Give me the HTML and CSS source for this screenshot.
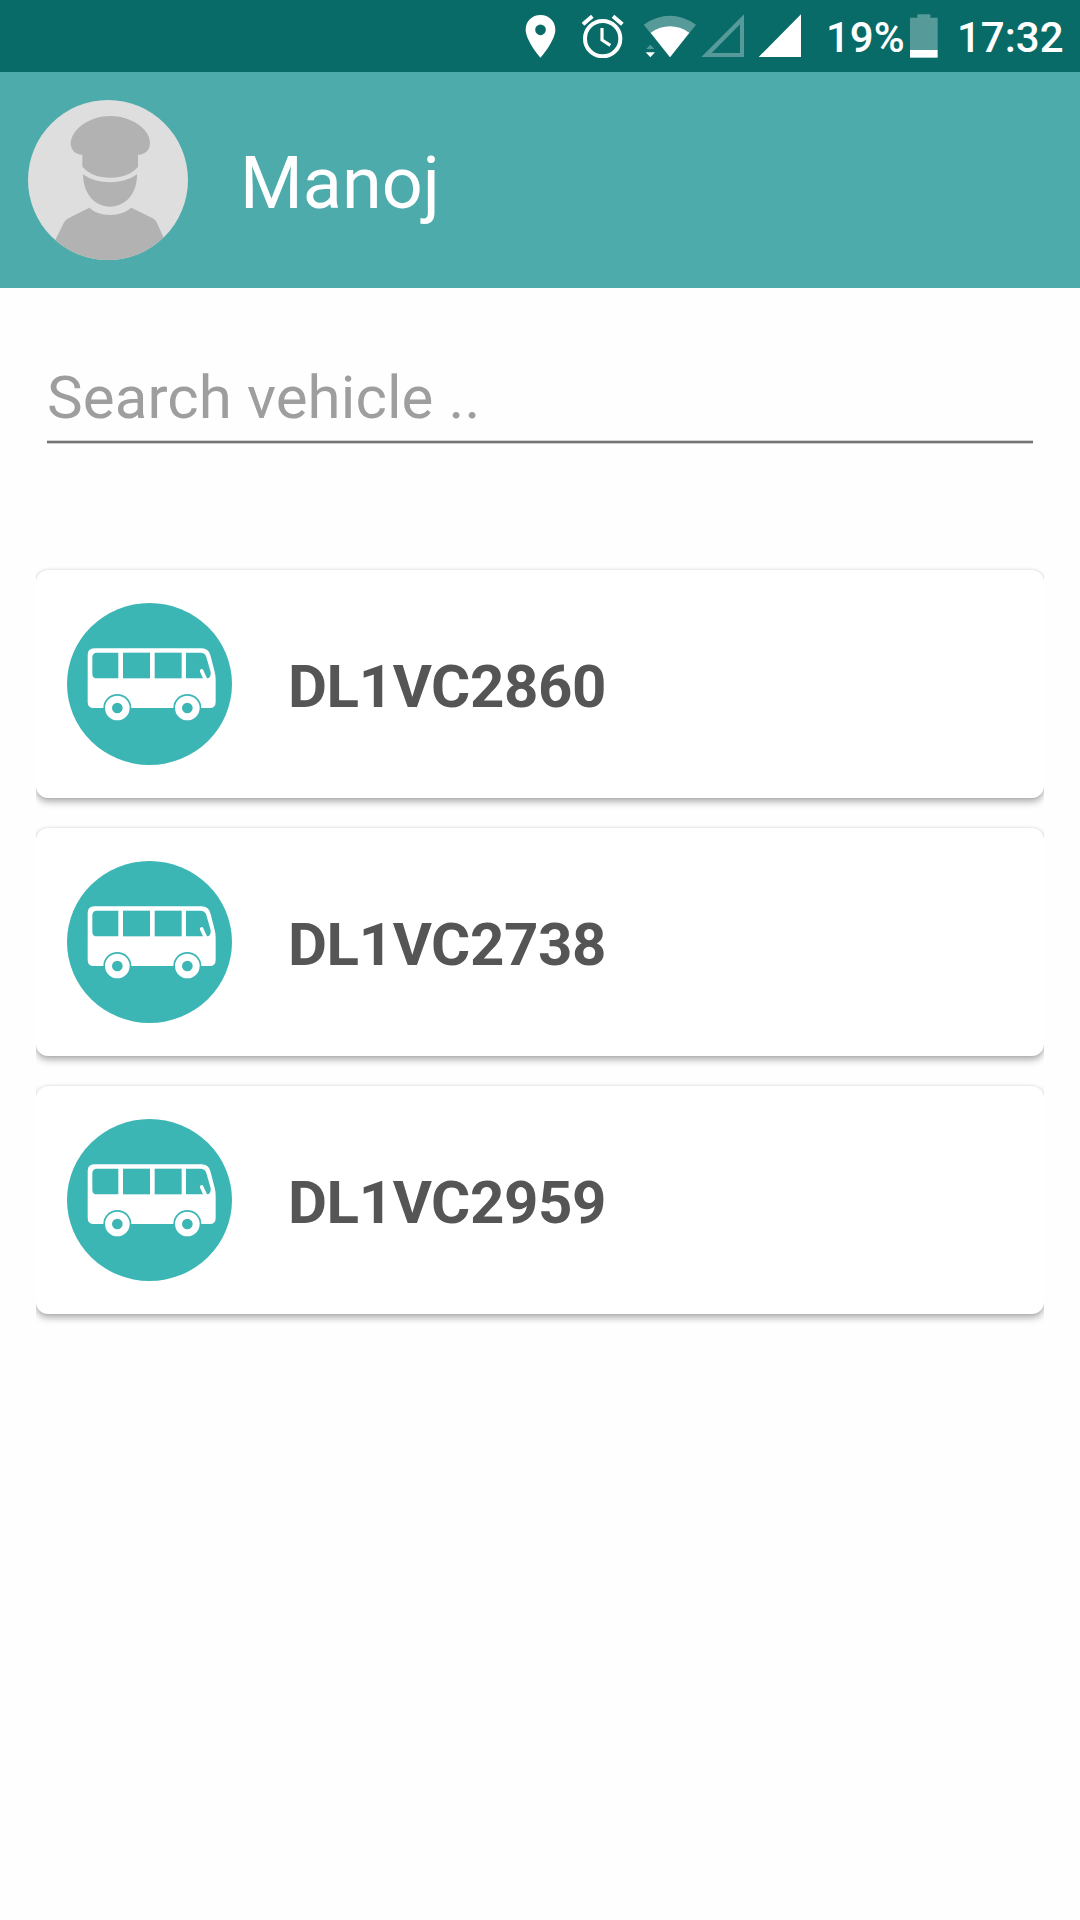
FILE: index.html
```html
<!DOCTYPE html>
<html lang="en">
<head>
<meta charset="UTF-8" />
<meta name="viewport" content="width=device-width, initial-scale=1" />
<title>Vehicles</title>
<link rel="stylesheet" href="styles.css">
</head>
<body>

<!-- bus symbol, shared by all the cards -->
<svg class="defs" aria-hidden="true">
  <symbol id="bus" viewBox="0 0 495 486" preserveAspectRatio="none">
    <ellipse cx="247.5" cy="243" rx="247.5" ry="243" fill="#3cb5b5"/>
    <path fill="#fff" d="M82 136H404Q424 136 430 156L443 206Q446 218 446 232V297Q446 315 428 315H80Q62 315 62 297V156Q62 136 82 136Z"/>
    <g fill="#3cb5b5">
      <path d="M90 149H154V226H90Q76 226 76 212V163Q76 149 90 149Z"/>
      <path d="M168 149H249V226H168Z"/>
      <path d="M263 149H344V226H263Z"/>
      <path d="M357 149H400Q414 149 418 162L431 208Q432 226 420 226H357Z"/>
      <circle cx="151" cy="315" r="42"/>
      <circle cx="361" cy="315" r="42"/>
    </g>
    <path d="M404 204L415 228" stroke="#fff" stroke-width="11" stroke-linecap="round"/>
    <circle cx="151" cy="315" r="26.5" fill="none" stroke="#fff" stroke-width="21"/>
    <circle cx="361" cy="315" r="26.5" fill="none" stroke="#fff" stroke-width="21"/>
  </symbol>
</svg>

<div class="status-bar">
  <svg class="icon-pin" viewBox="75 42 93 132">
    <path fill="#fff" fill-rule="evenodd" d="M121.500 45C96 45 77 64 77 89C77 122 121.500 173 121.500 173S166 122 166 89C166 64 147 45 121.500 45ZM121.500 73.500A16 16 0 1 1 121.500 105.500A16 16 0 1 1 121.500 73.500Z"/>
  </svg>
  <svg class="icon-alarm" viewBox="243 42 129 132">
    <g fill="none" stroke="#fff">
      <circle cx="308" cy="116" r="53" stroke-width="12"/>
      <path d="M306 84V120L331 136" stroke-width="9.500"/>
      <path d="M249 73L277 49M367 73L339 49" stroke-width="12"/>
    </g>
  </svg>
  <svg class="icon-wifi" viewBox="429 42 162 132">
    <path fill="#569b99" d="M431 74Q510 21 588 74L510 172Z"/>
    <path fill="#fff" d="M452 98Q510 60 568 98L510 172Z"/>
    <path fill="#569b99" d="M439 147L451 134L463 147Z"/>
    <path fill="#fff" d="M437 157H465L451 172Z"/>
  </svg>
  <svg class="icon-signal" viewBox="603 42 132 132">
    <path fill="#569b99" fill-rule="evenodd" d="M732 43V171H604ZM720 73L635 159H720Z"/>
  </svg>
  <svg class="icon-signal full" viewBox="774 42 132 132">
    <path fill="#fff" d="M903 43V171H776Z"/>
  </svg>
  <span class="battery-text">19%</span>
  <svg class="icon-battery" viewBox="330 42 84 132">
    <path fill="#569b99" d="M330 53H352V43H391V53H413V151H330Z"/>
    <path fill="#fff" d="M330 150H413V173H330Z"/>
  </svg>
  <span class="clock">17:32</span>
</div>

<header>
  <svg class="avatar" viewBox="0 0 480 480">
    <clipPath id="round"><circle cx="240" cy="240" r="240"/></clipPath>
    <circle cx="240" cy="240" r="240" fill="#dedede"/>
    <g fill="#b2b2b2" clip-path="url(#round)">
      <path d="M247 48C310 48 366 88 366 128C366 150 352 163 330 164V200C312 222 282 233 247 233S182 222 163 200V164C142 163 128 150 128 128C132 88 184 48 247 48Z"/>
      <path d="M165 223C186 239 216 247 246 247S306 239 327 223C328 282 292 320 246 320S166 282 165 223Z"/>
      <path d="M82 420L107 369Q111 360 121 355L184 323Q206 344 246 345Q286 344 310 323L374 355Q382 359 386 367L410 420V480H82Z"/>
    </g>
  </svg>
  <h1>Manoj</h1>
</header>

<main>
  <input class="search" type="text" placeholder="Search vehicle ..">

  <div class="vehicle-list">
    <div class="vehicle-card">
      <svg class="bus"><use href="#bus"/></svg>
      <span class="plate">DL1VC2860</span>
    </div>
    <div class="vehicle-card">
      <svg class="bus"><use href="#bus"/></svg>
      <span class="plate">DL1VC2738</span>
    </div>
    <div class="vehicle-card">
      <svg class="bus"><use href="#bus"/></svg>
      <span class="plate">DL1VC2959</span>
    </div>
  </div>
</main>

</body>
</html>
```

FILE: styles.css
```css
:root {
  --status-color: #096b68;
  --primary-color: #4eabab;
  --text-color: #555;
  --hint-color: #9e9e9e;
}

* {
  box-sizing: border-box;
}

body {
  margin: 0;
  min-height: 1920px;
  font-family: Roboto, sans-serif;
  background-color: #fefefe;
  color: var(--text-color);
}

svg {
  display: block;
  flex: none;
}

.defs {
  display: none;
}

.status-bar {
  height: 72px;
  padding: 0 15px 0 525px;
  display: flex;
  align-items: center;
  background-color: var(--status-color);
  color: #fff;
  font-size: 42px;
  font-weight: 500;
}

.status-bar svg {
  height: 44px;
}

.icon-pin {
  width: 31px;
}

.icon-alarm {
  width: 43px;
  margin-left: 25px;
}

.icon-wifi {
  width: 54px;
  margin-left: 19px;
}

.icon-signal {
  width: 44px;
  margin-left: 4px;
}

.icon-signal.full {
  margin-left: 13px;
}

.battery-text {
  width: 84px;
  margin-left: 24px;
}

.icon-battery {
  width: 28px;
}

.battery-text,
.clock {
  line-height: 48px;
  padding-top: 3px;
}

.clock {
  margin-left: 19px;
}

header {
  height: 216px;
  padding-left: 28px;
  display: flex;
  align-items: center;
  background-color: var(--primary-color);
}

.avatar {
  width: 160px;
  height: 160px;
}

h1 {
  margin: 6px 0 0 52px;
  font-size: 72px;
  font-weight: 400;
  color: #fff;
}

main {
  padding: 65px 0 0;
}

.search {
  display: block;
  width: 986px;
  height: 90px;
  margin: 0 auto;
  padding: 1px 0 0;
  border: none;
  border-bottom: 2px solid #757575;
  box-shadow: 0 1px #cfcfcf, inset 0 -1px #d4d4d4;
  outline: none;
  background: none;
  font-family: inherit;
  font-size: 60px;
  letter-spacing: 0.1px;
  color: var(--text-color);
}

.search::placeholder {
  color: var(--hint-color);
  opacity: 1;
}

/* clips the card shadows at both sides */
.vehicle-list {
  margin: 107px 36px 0;
  padding: 20px 0;
  display: flex;
  flex-direction: column;
  gap: 30px;
  overflow: hidden;
}

.vehicle-card {
  height: 228px;
  padding-left: 31px;
  display: flex;
  align-items: center;
  border-radius: 12px;
  background-color: #fff;
  box-shadow: 0 4px 7px rgba(0,0,0,0.3), 0 0 3px rgba(0,0,0,0.13);
}

.bus {
  width: 165px;
  height: 162px;
}

.plate {
  margin: 4px 0 0 56px;
  font-size: 60px;
  font-weight: 700;
  letter-spacing: -0.4px;
}
```
